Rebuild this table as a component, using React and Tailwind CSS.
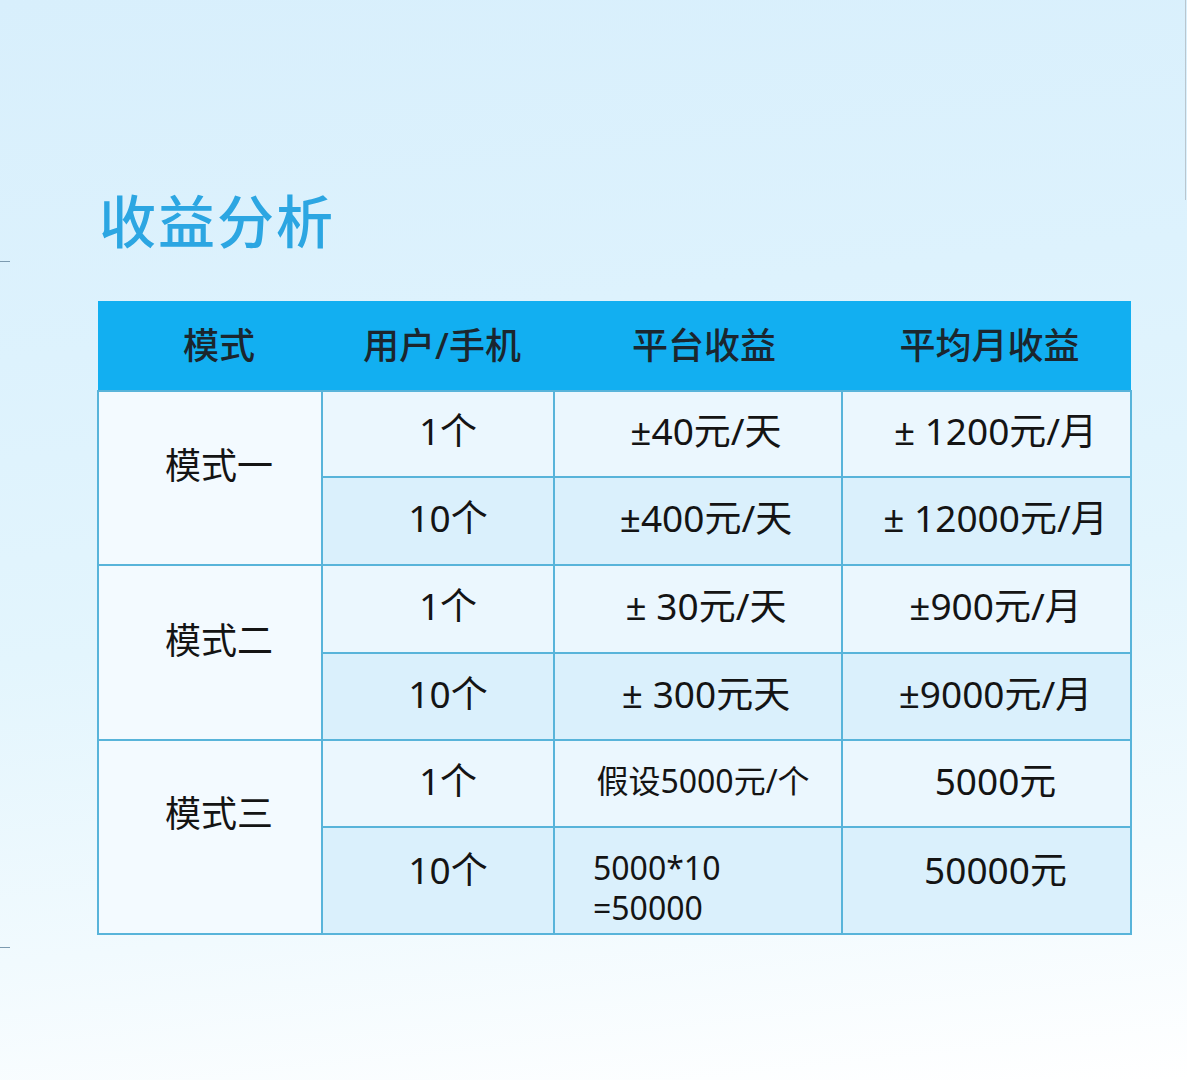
import React from 'react';

const rows = [
  {
    mode: '模式一',
    pad: 'pb-[24px]',
    items: [
      { count: '1个', platform: '±40元/天', month: '± 1200元/月', h: 'h-[86px]' },
      { count: '10个', platform: '±400元/天', month: '± 12000元/月', h: 'h-[88px]' },
    ],
  },
  {
    mode: '模式二',
    pad: 'pb-[24px]',
    items: [
      { count: '1个', platform: '± 30元/天', month: '±900元/月', h: 'h-[88px]' },
      { count: '10个', platform: '± 300元天', month: '±9000元/月', h: 'h-[87px]' },
    ],
  },
  {
    mode: '模式三',
    pad: 'pb-[46px]',
    items: [
      { count: '1个', platform: '假设5000元/个', month: '5000元', h: 'h-[87px]', small: true },
      { count: '10个', platform: '5000*10\n=50000', month: '50000元', h: 'h-[107px]', small: true, multi: true },
    ],
  },
];

const cell = 'border-2 border-[#58b4da] text-center align-middle';

export default function App() {
  return (
    <div
      className="relative w-[1187px] h-[1080px] overflow-hidden bg-[linear-gradient(174deg,#d8effc_0%,#ddf2fd_30%,#e3f5fd_55%,#f1fafe_80%,#ffffff_100%)] text-[#141414]"
      style={{ fontFamily: '"Noto Sans", "Noto Sans CJK SC", sans-serif' }}
    >
      <div className="absolute left-0 top-[261px] w-[10px] h-[1px] bg-[#7d9bb0]" />
      <div className="absolute left-0 top-[947px] w-[10px] h-[1px] bg-[#7d9bb0]" />
      <div className="absolute right-[1px] top-0 w-[1px] h-[200px] bg-[#b9c6cf]" />

      <div className="pt-[186px] pl-[99px]">
        <h1 className="text-[57px] leading-[70px] font-medium tracking-[2px] text-[#2ca6e2]">收益分析</h1>
      </div>

      <div className="pl-[97px] pt-[45px]">
        <table className="border-collapse w-[1033px] table-fixed">
          <colgroup>
            <col className="w-[224px]" />
            <col className="w-[232px]" />
            <col className="w-[288px]" />
            <col className="w-[289px]" />
          </colgroup>
          <thead>
            <tr className="h-[90px] bg-[#12aff1]">
              <th className="text-[36px] font-medium text-[#1b262e] align-middle pl-[18px]">模式</th>
              <th className="text-[36px] font-medium text-[#1b262e] align-middle pl-[8px]">用户/手机</th>
              <th className="text-[36px] font-medium text-[#1b262e] align-middle pl-[12px]">平台收益</th>
              <th className="text-[36px] font-medium text-[#1b262e] align-middle pl-[6px]">平均月收益</th>
            </tr>
          </thead>
          <tbody>
            {rows.map((group) =>
              group.items.map((item, i) => (
                <tr key={group.mode + i} className={item.h}>
                  {i === 0 && (
                    <td rowSpan={2} className={`${cell} bg-[#f3faff] text-[36px] pl-[18px] ${group.pad}`}>
                      {group.mode}
                    </td>
                  )}
                  <td
                    className={`${cell} text-[37px] pl-[20px] ${i === 0 ? 'bg-[#ebf7fe]' : 'bg-[#daf0fc]'} ${
                      item.multi ? 'align-top pt-[14px]' : 'pb-[6px]'
                    }`}
                  >
                    {item.count}
                  </td>
                  <td
                    className={`${cell} ${i === 0 ? 'bg-[#ebf7fe]' : 'bg-[#daf0fc]'} ${
                      item.small ? 'text-[32px]' : 'text-[37px] pl-[16px]'
                    } ${item.multi ? 'text-left align-top pl-[38px] pt-[20px] leading-[40px] text-[31px]' : 'pb-[6px] pl-[10px]'}`}
                  >
                    {item.multi
                      ? item.platform.split('\n').map((l) => <div key={l}>{l}</div>)
                      : item.platform}
                  </td>
                  <td
                    className={`${cell} text-[37px] pl-[18px] ${i === 0 ? 'bg-[#ebf7fe]' : 'bg-[#daf0fc]'} ${
                      item.multi ? 'align-top pt-[14px]' : 'pb-[6px]'
                    }`}
                  >
                    {item.month}
                  </td>
                </tr>
              ))
            )}
          </tbody>
        </table>
      </div>
    </div>
  );
}
